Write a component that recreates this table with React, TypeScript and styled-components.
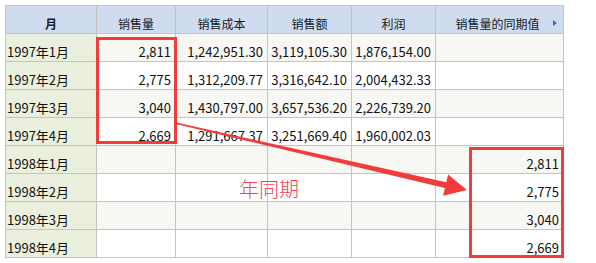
import React from "react";
import styled, { createGlobalStyle } from "styled-components";

const GlobalStyle = createGlobalStyle`
  html, body {
    margin: 0;
    padding: 0;
    background: #ffffff;
  }
  body {
    font-family: "Noto Sans CJK SC", "Noto Sans", sans-serif;
    color: #111;
  }
`;

const RED = "#f23b3b";

const Page = styled.div`
  width: 596px;
  height: 263px;
  padding: 5px 0 0 5px;
  box-sizing: border-box;
  overflow: hidden;
`;

// 表と注釈レイヤーを同じセルに重ねる
const Stack = styled.div`
  display: grid;
  width: max-content;
  & > * {
    grid-area: 1 / 1;
  }
`;

// 罫線はグリッドの背景色と1pxの隙間で描く
const Sheet = styled.div`
  display: grid;
  grid-template-columns: 90px 78px 91px 83px 83px 127px;
  grid-auto-rows: 27px;
  gap: 1px;
  padding: 1px;
  background: #c7c4bb;
`;

const Marks = styled(Sheet)`
  background: transparent;
  pointer-events: none;
`;

const HeadCell = styled.div<{ $bold?: boolean; $menu?: boolean }>`
  display: flex;
  justify-content: center;
  align-items: flex-start;
  gap: 6px;
  background: #cfdcef;
  font-size: 12px;
  line-height: 19px;
  padding: 8px ${(p) => (p.$menu ? "6px" : "0")} 0 ${(p) => (p.$menu ? "12px" : "0")};
  box-sizing: border-box;
  font-weight: ${(p) => (p.$bold ? 700 : 400)};
  color: #1a1a1a;
  white-space: nowrap;
`;

const HeadLabel = styled.span`
  flex: 1;
  text-align: center;
`;

const MenuMark = styled.span`
  flex: none;
  margin-top: 6px;
  width: 0;
  height: 0;
  border-top: 3px solid transparent;
  border-bottom: 3px solid transparent;
  border-left: 4px solid #3a6cc2;
`;

const MonthCell = styled.div`
  background: #ebf0de;
  font-size: 13px;
  line-height: 19px;
  padding: 8px 0 0 1px;
  box-sizing: border-box;
  white-space: nowrap;
`;

const NumCell = styled.div<{ $shade: boolean }>`
  background: ${(p) => (p.$shade ? "#f7f7f4" : "#ffffff")};
  font-size: 13px;
  line-height: 19px;
  padding: 8px 4px 0 0;
  box-sizing: border-box;
  text-align: right;
  white-space: nowrap;
`;

const Frame = styled.div<{ $col: string; $row: string; $margin: string }>`
  grid-column: ${(p) => p.$col};
  grid-row: ${(p) => p.$row};
  margin: ${(p) => p.$margin};
  border: 3px solid ${RED};
  box-sizing: border-box;
`;

const Arrow = styled.svg`
  grid-column: 1 / -1;
  grid-row: 1 / -1;
`;

const Note = styled.span`
  grid-column: 3;
  grid-row: 7;
  margin: 5px 0 0 63px;
  font-size: 20px;
  line-height: 20px;
  font-weight: 300;
  color: #ee4456;
  white-space: nowrap;
`;

type Row = { month: string; values: string[] };

const headers = ["销售量", "销售成本", "销售额", "利润", "销售量的同期值"];

const rows: Row[] = [
  { month: "1997年1月", values: ["2,811", "1,242,951.30", "3,119,105.30", "1,876,154.00", ""] },
  { month: "1997年2月", values: ["2,775", "1,312,209.77", "3,316,642.10", "2,004,432.33", ""] },
  { month: "1997年3月", values: ["3,040", "1,430,797.00", "3,657,536.20", "2,226,739.20", ""] },
  { month: "1997年4月", values: ["2,669", "1,291,667.37", "3,251,669.40", "1,960,002.03", ""] },
  { month: "1998年1月", values: ["", "", "", "", "2,811"] },
  { month: "1998年2月", values: ["", "", "", "", "2,775"] },
  { month: "1998年3月", values: ["", "", "", "", "3,040"] },
  { month: "1998年4月", values: ["", "", "", "", "2,669"] },
];

const App: React.FC = () => {
  return (
    <Page>
      <GlobalStyle />
      <Stack>
        <Sheet>
          <HeadCell $bold>月</HeadCell>
          {headers.map((h, i) => {
            const last = i === headers.length - 1;
            return (
              <HeadCell key={h} $menu={last}>
                <HeadLabel>{h}</HeadLabel>
                {last && <MenuMark />}
              </HeadCell>
            );
          })}
          {rows.map((row, r) => (
            <React.Fragment key={row.month}>
              <MonthCell>{row.month}</MonthCell>
              {row.values.map((v, c) => (
                <NumCell key={c} $shade={r % 2 === 0}>
                  {v}
                </NumCell>
              ))}
            </React.Fragment>
          ))}
        </Sheet>

        {/* 注釈レイヤー：赤枠・矢印・テキスト */}
        <Marks>
          <Arrow width="557" height="251" viewBox="6 6 557 251">
            <polygon
              fill={RED}
              points="175.2,122.3 446.3,182.2 448.1,174.4 467,190 443.1,195.8 444.9,188 174.8,123.7"
            />
          </Arrow>
          <Frame $col="2" $row="2 / 6" $margin="3px -2px 1px -1px" />
          <Frame $col="6" $row="6 / 10" $margin="1px -1px -1px 33px" />
          <Note>年同期</Note>
        </Marks>
      </Stack>
    </Page>
  );
};

export default App;
